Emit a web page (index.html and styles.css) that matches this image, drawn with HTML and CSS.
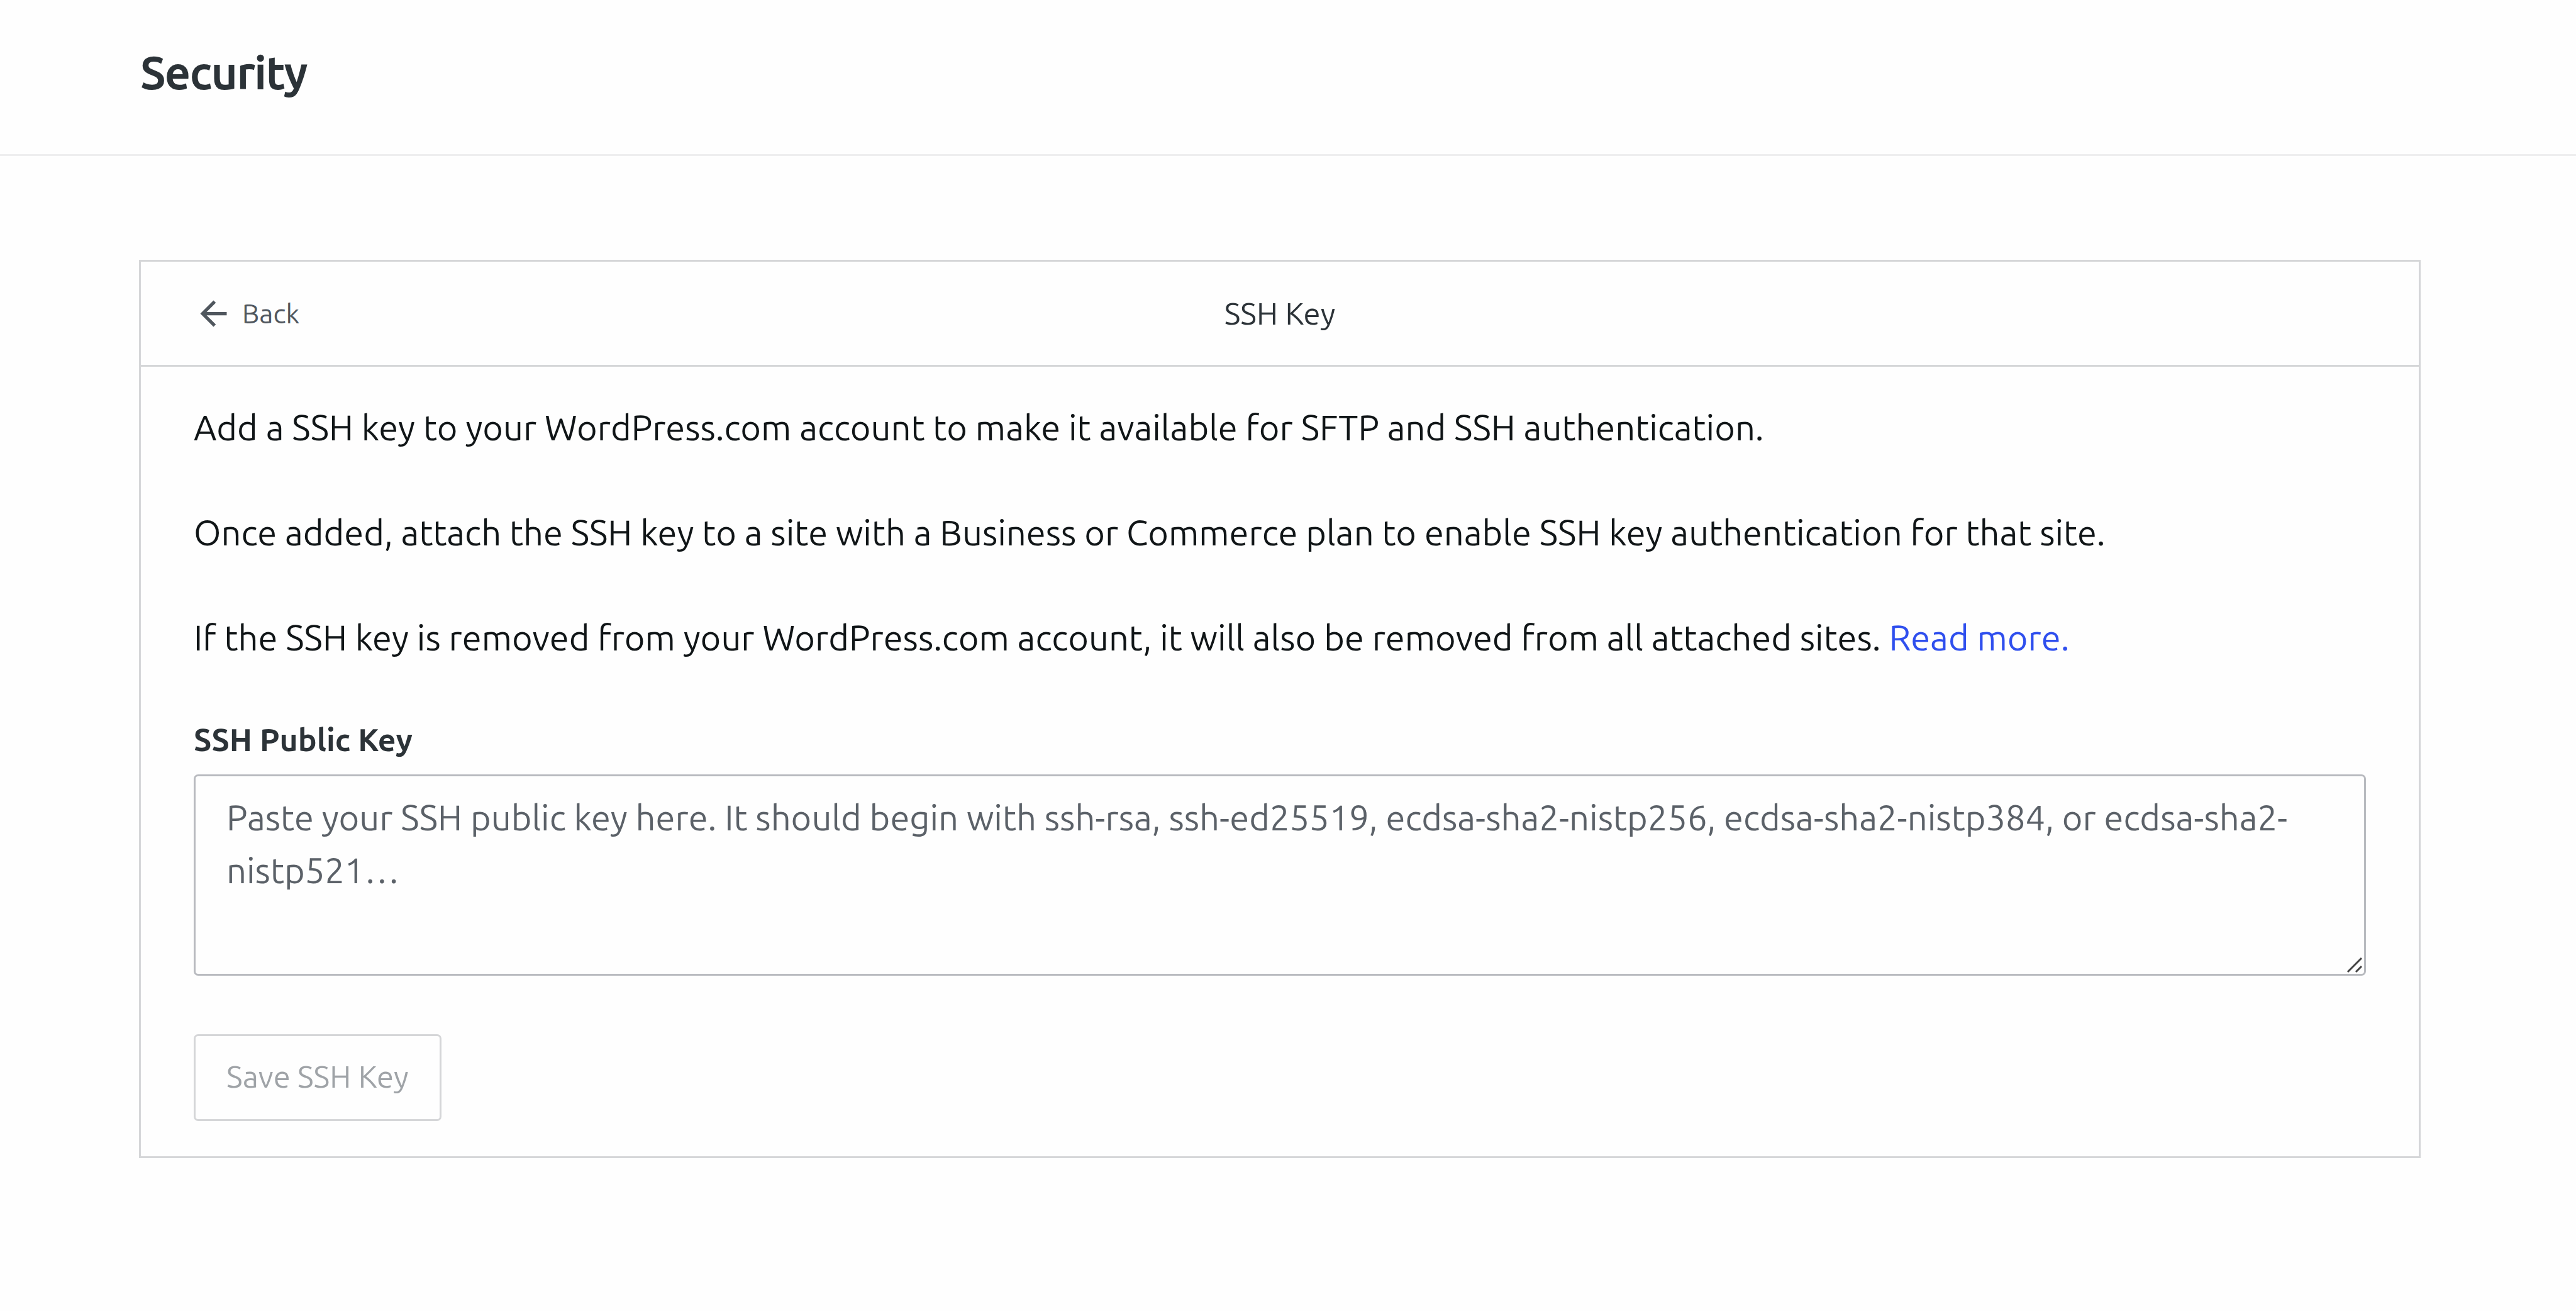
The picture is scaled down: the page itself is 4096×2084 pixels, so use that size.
FILE: index.html
```html
<!DOCTYPE html>
<html lang="en">
<head>
<meta charset="utf-8">
<title>Security</title>
<link rel="stylesheet" href="styles.css">
</head>
<body>
<header class="page-header">
  <h1 class="page-title">Security</h1>
</header>
<main class="content">
  <section class="card">
    <div class="card-header">
      <button type="button" class="back">
        <svg class="back-icon" viewBox="0 0 24 24" aria-hidden="true"><path d="M20 11H7.83l5.59-5.59L12 4l-8 8 8 8 1.41-1.41L7.83 13H20v-2z"/></svg>
        <span>Back</span>
      </button>
      <h2 class="card-title">SSH Key</h2>
    </div>
    <div class="card-body">
      <p class="text">Add a SSH key to your WordPress.com account to make it available for SFTP and SSH authentication.</p>
      <p class="text">Once added, attach the SSH key to a site with a Business or Commerce plan to enable SSH key authentication for that site.</p>
      <p class="text">If the SSH key is removed from your WordPress.com account, it will also be removed from all attached sites. <a class="link" href="#">Read more.</a></p>
      <form class="form">
        <label class="label" for="ssh-key">SSH Public Key</label>
        <div class="field">
          <textarea class="textarea" id="ssh-key" placeholder="Paste your SSH public key here. It should begin with ssh-rsa, ssh-ed25519, ecdsa-sha2-nistp256, ecdsa-sha2-nistp384, or ecdsa-sha2-nistp521…"></textarea>
          <svg class="grip" viewBox="0 0 32 32" aria-hidden="true"><path d="M7 30 29 8M20 30l9-9"/></svg>
        </div>
        <button type="submit" class="save" disabled>Save SSH Key</button>
      </form>
    </div>
  </section>
</main>
</body>
</html>
```

FILE: styles.css
```css
* {
  box-sizing: border-box;
}

body {
  margin: 0;
  background: #fefefe;
  color: #101517;
  font-family: Ubuntu, "Noto Sans", sans-serif;
  font-size: 56px;
  line-height: 84px;
}

.page-header {
  padding: 73px 224px 88px;
  border-bottom: 3px solid #eeeeef;
}

.page-title {
  margin: 0;
  color: #2c3338;
  font-size: 71px;
  font-weight: 500;
  line-height: 84px;
  -webkit-text-stroke: 2px currentColor;
}

.content {
  padding: 165px 247px 165px 221px;
}

.card {
  border: 3px solid #d5d6d8;
}

.card-header {
  display: grid;
  grid-template-columns: 1fr auto 1fr;
  align-items: center;
  padding: 40px 84px;
  border-bottom: 3px solid #d5d6d8;
}

.back {
  display: flex;
  align-items: center;
  justify-self: start;
  gap: 14px;
  padding: 0;
  border: 0;
  background: none;
  color: #50575e;
  font: inherit;
  font-size: 43px;
}

.back-icon {
  width: 63px;
  height: 63px;
  fill: currentColor;
}

.card-title {
  margin: 0;
  color: #2c3338;
  font-size: 49px;
  font-weight: 400;
}

.card-body {
  padding: 55px 84px 56px;
}

.text {
  margin: 0 0 83px;
}

.link {
  color: #2f4fee;
  text-decoration: none;
}

.form {
  display: flex;
  flex-direction: column;
  align-items: flex-start;
}

.label {
  margin-bottom: 20px;
  color: #2c3338;
  font-size: 50px;
  font-weight: 700;
  line-height: 72px;
}

.field {
  position: relative;
  display: flex;
  width: 100%;
  margin-bottom: 93px;
}

.textarea {
  width: 100%;
  height: 320px;
  padding: 24px 49px;
  border: 3px solid #b8babf;
  border-radius: 7px;
  background: #fefefe;
  color: #2c3338;
  font: inherit;
  resize: none;
}

.textarea::placeholder {
  color: #5b6168;
  opacity: 1;
}

.grip {
  position: absolute;
  right: 4px;
  bottom: 4px;
  width: 32px;
  height: 32px;
  fill: none;
  stroke: #444;
  stroke-width: 3;
}

.save {
  padding: 22px 49px 26px;
  border: 3px solid #d5d6d8;
  border-radius: 7px;
  background: #fefefe;
  color: #9fa3a7;
  font: inherit;
  font-size: 49px;
}
```
